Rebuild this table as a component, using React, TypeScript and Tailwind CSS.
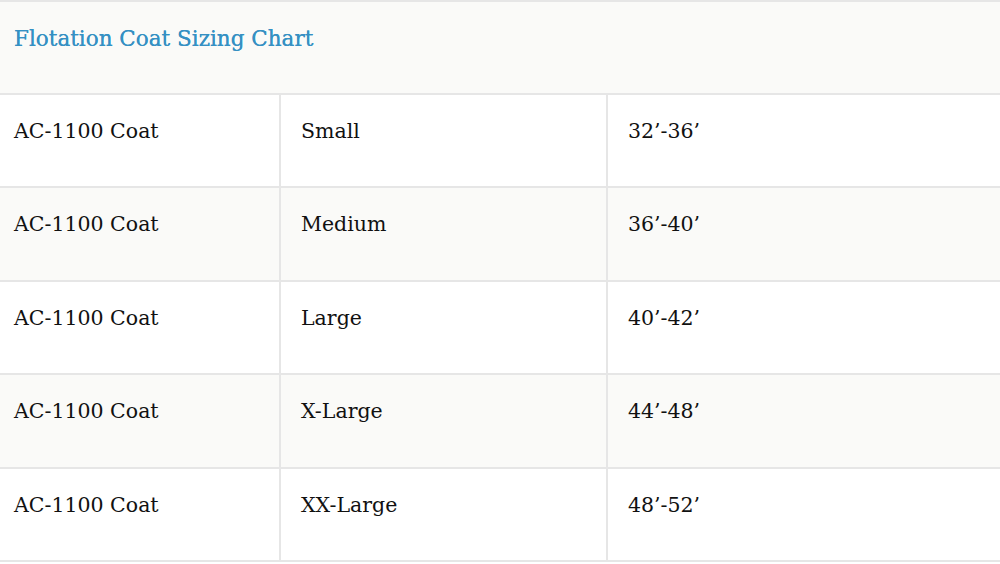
const rows = [
  { model: 'AC-1100 Coat', size: 'Small', chest: '32’-36’' },
  { model: 'AC-1100 Coat', size: 'Medium', chest: '36’-40’' },
  { model: 'AC-1100 Coat', size: 'Large', chest: '40’-42’' },
  { model: 'AC-1100 Coat', size: 'X-Large', chest: '44’-48’' },
  { model: 'AC-1100 Coat', size: 'XX-Large', chest: '48’-52’' },
];

export default function App() {
  return (
    <div className="w-[1000px] h-[564px] bg-white overflow-hidden" style={{ fontFamily: '"DejaVu Serif", "Liberation Serif", serif' }}>
      <table className="w-full border-collapse table-fixed">
        <colgroup>
          <col className="w-[280px]" />
          <col className="w-[327px]" />
          <col />
        </colgroup>
        <thead>
          <tr className="bg-[#fafaf8]">
            <th colSpan={3} className="h-[93px] border-y-2 border-[#e6e6e6] pl-[14px] pt-[19px] text-left align-top font-normal text-[21.5px] leading-[36px] text-[#3590c3] [text-shadow:0_0_0.4px_#3590c3]">
              Flotation Coat Sizing Chart
            </th>
          </tr>
        </thead>
        <tbody>
          {rows.map((r, i) => (
            <tr key={i} className={i % 2 === 1 ? 'bg-[#fafaf8]' : 'bg-white'}>
              <td className="h-[93.4px] border-b-2 border-r-2 border-[#e6e6e6] pl-[14px] pt-[20px] align-top text-[20.5px] leading-[32px] text-[#111]">
                {r.model}
              </td>
              <td className="border-b-2 border-r-2 border-[#e6e6e6] pl-[20px] pt-[20px] align-top text-[20.5px] leading-[32px] text-[#111]">
                {r.size}
              </td>
              <td className="border-b-2 border-[#e6e6e6] pl-[20px] pt-[20px] align-top text-[20.5px] leading-[32px] text-[#111]">
                {r.chest}
              </td>
            </tr>
          ))}
        </tbody>
      </table>
    </div>
  );
}
